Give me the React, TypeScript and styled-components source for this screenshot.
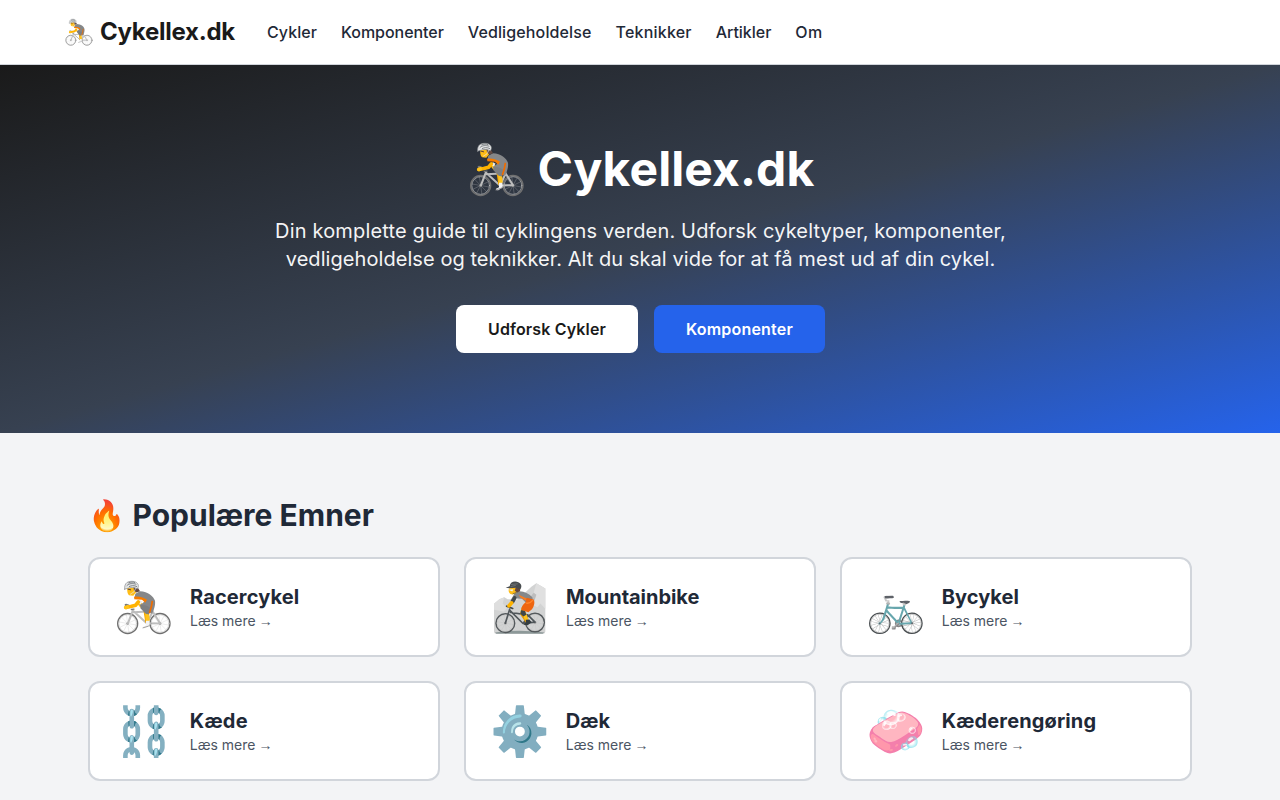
import React from "react";
import styled, { createGlobalStyle } from "styled-components";

const Global = createGlobalStyle`
  *, *::before, *::after { box-sizing: border-box; margin: 0; padding: 0; }
  body {
    margin: 0;
    background: #f3f4f6;
    color: #1f2937;
    font-family: Inter, "Noto Color Emoji", sans-serif;
    font-size: 16px;
    line-height: 24px;
  }
  a { color: inherit; text-decoration: none; }
`;

const Header = styled.header`
  height: 65px;
  background: #fff;
  border-bottom: 1px solid #d1d5db;
`;
const Nav = styled.nav`
  display: flex;
  align-items: center;
  height: 64px;
  padding: 0 64px;
`;
const Brand = styled.a`
  display: flex;
  align-items: center;
  gap: 6px;
  margin-right: 32px;
  font-size: 24px;
  line-height: 32px;
  font-weight: 700;
  letter-spacing: -0.27px;
  color: #1a1a1a;
`;
const NavLinks = styled.div`
  display: flex;
  gap: 24px;
`;
const NavLink = styled.a<{ $tracking: number }>`
  font-weight: 500;
  letter-spacing: ${(p) => p.$tracking}px;
`;
const Hero = styled.section`
  height: 368px;
  padding: 80px 32px;
  text-align: center;
  color: #fff;
  background: linear-gradient(to bottom right, #1a1a1a, #374151, #2563eb);
`;
const HeroTitle = styled.h1`
  display: flex;
  align-items: center;
  justify-content: center;
  gap: 11px;
  height: 48px;
  margin-bottom: 24px;
  padding-left: 1px;
  font-size: 48px;
  line-height: 48px;
  font-weight: 700;
  letter-spacing: 0.09px;
`;
const HeroText = styled.p`
  max-width: 768px;
  margin: 0 auto 32px;
  padding-left: 1px;
  font-size: 20px;
  line-height: 28px;
  opacity: 0.95;
`;
const HeroLine = styled.span<{ $tracking: number }>`
  display: block;
  letter-spacing: ${(p) => p.$tracking}px;
`;
const Actions = styled.div`
  display: flex;
  justify-content: center;
  gap: 16px;
  padding-left: 1px;
`;
const Button = styled.a<{ $primary?: boolean }>`
  padding: 12px 32px;
  border-radius: 8px;
  font-weight: 600;
  letter-spacing: ${(p) => (p.$primary ? 0.2 : 0.14)}px;
  background: ${(p) => (p.$primary ? "#2563eb" : "#fff")};
  color: ${(p) => (p.$primary ? "#fff" : "#1a1a1a")};
`;
const Topics = styled.main`
  padding: 64px 88px 19px;
`;
const TopicsTitle = styled.h2`
  margin-bottom: 24px;
  font-size: 30px;
  line-height: 36px;
  font-weight: 700;
`;
const Grid = styled.div`
  display: grid;
  grid-template-columns: repeat(3, 1fr);
  gap: 24px;
`;
const Card = styled.a`
  display: flex;
  align-items: center;
  gap: 16px;
  height: 100px;
  padding: 0 24px;
  background: #fff;
  border: 2px solid #d1d5db;
  border-radius: 12px;
`;
const CardIcon = styled.span`
  font-size: 48px;
  line-height: 48px;
`;
const CardTitle = styled.h3<{ $tracking: number }>`
  font-size: 20px;
  line-height: 28px;
  font-weight: 700;
  letter-spacing: ${(p) => p.$tracking}px;
`;
const CardMore = styled.p`
  font-size: 14px;
  line-height: 20px;
  color: #4b5563;
`;
const Arrow = styled.span`
  margin-left: -1px;
  font-family: "Liberation Sans", sans-serif;
`;
const Pictogram = styled.svg`
  display: block;
  flex: none;
  width: 1.25em;
  height: 1.25em;
  margin: -0.125em 0;
`;

const spokes = [10, 46, 82, 118, 154];

const Wheel = ({ cx, cy, r, tire, width }: { cx: number; cy: number; r: number; tire: string; width: number }) => (
  <g fill="none">
    <circle cx={cx} cy={cy} r={r} stroke={tire} strokeWidth={width} />
    <circle cx={cx} cy={cy} r={r - 3.5} stroke="#c4c4c4" strokeWidth="1.8" />
    {spokes.map((a) => (
      <path key={a} d={`M${cx - r + 4} ${cy}h${2 * r - 8}`} transform={`rotate(${a} ${cx} ${cy})`} stroke="#bdbdbd" strokeWidth=".8" />
    ))}
    <circle cx={cx} cy={cy} r="4" fill="#9a9a9a" />
  </g>
);

const RoadCyclist = () => (
  <Pictogram viewBox="18 10.5 180 180" fill="none" strokeLinecap="round" strokeLinejoin="round">
    <Wheel cx={59} cy={150} r={30} tire="#707070" width={4} />
    <Wheel cx={156} cy={150} r={30} tire="#707070" width={4} />
    <path d="M74 112L60 149M75 112L117 150L156 149L134 114L117 150M76 116L134 113" stroke="#bdbdbd" strokeWidth="6" />
    <path d="M70 108L78 107M66 97C52 89 46 94 59 99" stroke="#77797a" strokeWidth="4" />
    <path d="M96 92L111 105L117 144" stroke="#f2a600" strokeWidth="11" />
    <path d="M98 94L117 113L119 139" stroke="#ffc31b" strokeWidth="12" />
    <path d="M114 142L124 142L125 155L112 164Q103 166 105 160L114 155Z" fill="#f4f4f4" />
    <path d="M105 163L121 158L130 150" stroke="#9e9e9e" strokeWidth="3" />
    <path d="M82 61L96 53C120 54 137 68 141 82C143 95 137 113 132 121L104 104L95 94C104 91 109 85 111 78L89 76L80 70Z" fill="#858789" />
    <path d="M96 93C107 94 121 97 126 103L123 123L113 121L98 105Z" fill="#7d7f81" />
    <path d="M78 70C91 67 108 72 117 79L112 88L102 79L79 77Z" fill="#f57c00" />
    <path d="M133 82C132 96 128 108 124 119" stroke="#ef6c00" strokeWidth="5" strokeLinecap="butt" />
    <path d="M96 80L104 85L97 93L89 86Z" fill="#ececec" />
    <path d="M91 85L83 95L68 99L53 102" stroke="#ffb300" strokeWidth="11" />
    <path d="M50 98L60 94L64 103L54 108L48 104Z" fill="#ffc31b" />
    <path d="M58 43C57 54 58 61 63 65L76 67L84 57L81 42Z" fill="#ffbd16" />
    <path d="M76 39L88 40L96 53L85 57L78 51Z" fill="#644b43" />
    <path d="M60 47L68 49" stroke="#5d4037" strokeWidth="3" />
    <path d="M50 47C48 28 60 21 79 24C90 27 95 37 88 46C76 39 63 43 50 47Z" fill="#e4e6e7" stroke="#83878a" strokeWidth="2" />
    <path d="M57 36C64 29 74 29 84 32M62 28C69 25 75 25 80 27M64 39C70 36 78 35 86 39" stroke="#666b6e" strokeWidth="2.4" />
    <path d="M84 43L78 55L67 62" stroke="#e7e7e7" strokeWidth="2" />
  </Pictogram>
);

const MountainCyclist = () => (
  <Pictogram viewBox="12 10.5 180 180" fill="none" strokeLinecap="round" strokeLinejoin="round">
    <path d="M24 91L40 77L55 71L65 77L94 78L117 58L136 40L151 29L178 45V174Q178 181 171 181H31Q24 181 24 174Z" fill="#d2d3d3" />
    <path d="M151 29L143 58L151 64L140 94L154 101L163 90L178 106V45Z" fill="#e0e0e0" />
    <path d="M24 91L40 77L55 71L50 90L63 104L53 114L24 109Z" fill="#dedede" />
    <path d="M143 58L151 64L142 91L129 76Z" fill="#bdbdbd" />
    <path d="M27 177Q99 166 175 177L170 181H31Z" fill="#8d9999" />
    <Wheel cx={58} cy={149} r={28} tire="#54595c" width={4.5} />
    <Wheel cx={147} cy={147} r={28} tire="#54595c" width={4.5} />
    <path d="M71 107L58 149M73 112L111 150L147 146L126 125L112 150M74 117L124 124" stroke="#50565a" strokeWidth="5" />
    <path d="M62 98L80 105" stroke="#41474a" strokeWidth="5" />
    <path d="M111 104L107 121L121 142" stroke="#e79b00" strokeWidth="9" />
    <path d="M113 116L122 138" stroke="#ffc31b" strokeWidth="11" />
    <path d="M105 110L117 111L121 124L112 129L103 121Z" fill="#40474a" />
    <path d="M119 139L130 138L137 146L125 155L112 154L120 147Z" fill="#353d40" />
    <path d="M87 57L101 53Q123 54 139 71L142 85L119 87L108 76L89 75L81 88L73 81L80 70Z" fill="#85888a" />
    <path d="M98 64L124 76L119 82L103 72Z" fill="#f57c22" />
    <path d="M122 73L143 78Q149 91 138 107L127 116L106 109Q106 96 119 86Z" fill="#ee6510" />
    <path d="M121 89C135 91 138 82 140 80" stroke="#ff852b" strokeWidth="4" />
    <path d="M86 73L80 84" stroke="#41484b" strokeWidth="11" />
    <path d="M77 88L69 97" stroke="#ffb300" strokeWidth="11" />
    <path d="M69 45C66 55 70 62 79 63L89 59L98 51L92 41Z" fill="#ffbd16" />
    <path d="M90 40L103 43L102 53L94 57L86 52Z" fill="#6b493c" />
    <path d="M67 49L79 54L82 47Z" fill="#e7ecef" />
    <path d="M59 43L71 38C73 25 85 22 97 26C106 30 109 38 103 47L92 43L70 44Z" fill="#484c4f" />
    <path d="M76 33L94 31M75 39L88 36" stroke="#73787a" strokeWidth="2.5" />
    <path d="M98 43L91 57L81 61" stroke="#4b4b4b" strokeWidth="2" />
  </Pictogram>
);

const links = [
  { label: "Cykler", tracking: 0.08 },
  { label: "Komponenter", tracking: -0.05 },
  { label: "Vedligeholdelse", tracking: 0.13 },
  { label: "Teknikker", tracking: 0.2 },
  { label: "Artikler", tracking: -0.02 },
  { label: "Om", tracking: 0.3 },
];
const topics = [
  { icon: <RoadCyclist />, title: "Racercykel", tracking: 0.13 },
  { icon: <MountainCyclist />, title: "Mountainbike", tracking: -0.04 },
  { icon: "🚲", title: "Bycykel", tracking: 0.05 },
  { icon: "⛓️", title: "Kæde", tracking: 0.25 },
  { icon: "⚙️", title: "Dæk", tracking: 0.1 },
  { icon: "🧼", title: "Kæderengøring", tracking: 0.12 },
];

export default function App() {
  return (
    <>
      <Global />
      <Header>
        <Nav>
          <Brand href="#"><RoadCyclist />Cykellex.dk</Brand>
          <NavLinks>
            {links.map(({ label, tracking }) => (
              <NavLink href="#" key={label} $tracking={tracking}>{label}</NavLink>
            ))}
          </NavLinks>
        </Nav>
      </Header>
      <Hero>
        <HeroTitle><RoadCyclist />Cykellex.dk</HeroTitle>
        <HeroText>
          <HeroLine $tracking={0.16}>Din komplette guide til cyklingens verden. Udforsk cykeltyper, komponenter,</HeroLine>
          <HeroLine $tracking={0.065}>vedligeholdelse og teknikker. Alt du skal vide for at få mest ud af din cykel.</HeroLine>
        </HeroText>
        <Actions>
          <Button href="#">Udforsk Cykler</Button>
          <Button href="#" $primary>Komponenter</Button>
        </Actions>
      </Hero>
      <Topics>
        <TopicsTitle>🔥 Populære Emner</TopicsTitle>
        <Grid>
          {topics.map(({ icon, title, tracking }) => (
            <Card href="#" key={title}>
              <CardIcon>{icon}</CardIcon>
              <div>
                <CardTitle $tracking={tracking}>{title}</CardTitle>
                <CardMore>Læs mere <Arrow>→</Arrow></CardMore>
              </div>
            </Card>
          ))}
        </Grid>
      </Topics>
    </>
  );
}
